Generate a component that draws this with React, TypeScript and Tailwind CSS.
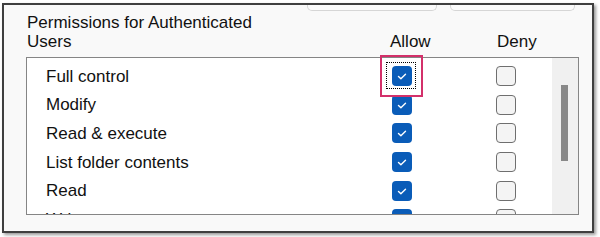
import React from "react";

const rows = [
  "Full control",
  "Modify",
  "Read & execute",
  "List folder contents",
  "Read",
  "Write",
];

function Checked() {
  return (
    <div className="w-[20px] h-[20px] rounded-[4px] bg-[#0a5cb8] flex items-center justify-center">
      <svg width="20" height="20" viewBox="0 0 20 20" fill="none">
        <path d="M6.5 10.4 L8.9 12.7 L13.5 8.2" stroke="white" strokeWidth="1.4" strokeLinecap="round" strokeLinejoin="round" />
      </svg>
    </div>
  );
}

function Unchecked() {
  return <div className="w-[20px] h-[20px] rounded-[4px] border border-[#6f6f6f] bg-[#f4f4f4]" />;
}

export default function App() {
  return (
    <div className="w-[600px] h-[237px] bg-white overflow-hidden" style={{ fontFamily: '"Liberation Sans", Arial, sans-serif' }}>
      <div className="ml-[2px] mt-[3px] w-[592px] h-[230px] border-2 border-[#3f3f3f] bg-[#f9f9f9] shadow-[2px_2px_3px_rgba(0,0,0,0.4)] text-[#111] flex flex-col">
        <div className="flex h-[6px] pl-[303px] gap-[13px]">
          <div className="w-[130px] h-full border-x border-b border-[#d6d6d6] rounded-b-[5px] bg-[#fbfbfb]" />
          <div className="w-[125px] h-full border-x border-b border-[#d6d6d6] rounded-b-[5px] bg-[#fbfbfb]" />
        </div>
        <div className="flex items-end mt-[2px] pl-[23px] text-[17px] leading-[19px]">
          <div className="w-[363px]">
            <div className="w-[240px]">Permissions for Authenticated Users</div>
          </div>
          <div className="w-[107px]">Allow</div>
          <div>Deny</div>
        </div>
        <div className="relative ml-[22px] mt-[6px] w-[553px] h-[158px]">
          <div className="w-full h-full border border-[#858585] bg-white flex overflow-hidden">
            <div className="w-[525px] pt-[4px] flex flex-col">
              {rows.map((r, i) => (
                <div key={r} className="flex items-center h-[28.6px] shrink-0 pl-[19px] text-[17px] leading-[19px]">
                  <div className="w-[346px]">{r}</div>
                  <div className="relative">
                    <Checked />
                    {i === 0 && (
                      <div className="absolute left-[-6px] right-[-4px] top-[-4px] bottom-[-3px] border border-dotted border-black" />
                    )}
                  </div>
                  <div className="w-[84px]" />
                  <Unchecked />
                </div>
              ))}
            </div>
            <div className="w-[26px] h-full bg-[#f0f0f0] pl-[9px] pt-[27px]">
              <div className="w-[7px] h-[76px] bg-[#888888]" />
            </div>
          </div>
          <div className="absolute left-[354px] top-[-2px] w-[43px] h-[42px] border-2 border-[#d3306a]" />
        </div>
      </div>
    </div>
  );
}
